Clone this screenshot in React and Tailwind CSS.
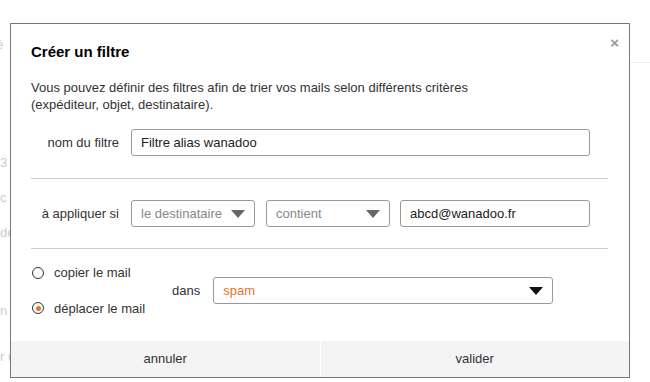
import React from 'react'

const font = { fontFamily: '"Liberation Sans", Arial, sans-serif' }

function Arrow({ dark = false }) {
  return (
    <svg width="14" height="8" viewBox="0 0 14 8" className="shrink-0">
      <path d="M0 0 L14 0 L7 8 Z" fill={dark ? '#111' : '#666'} />
    </svg>
  )
}

function Select({ value, className = '', dark = false, valueClass = 'text-[#888]' }) {
  return (
    <div className={`flex h-[27px] items-center justify-between rounded-[3px] border border-[#999] bg-white pl-[9px] pr-[9px] ${className}`}>
      <span className={`text-[13px] ${valueClass}`}>{value}</span>
      <Arrow dark={dark} />
    </div>
  )
}

function Radio({ checked, label }) {
  return (
    <div className="flex items-center gap-[10px]">
      <span className="flex h-[12px] w-[12px] items-center justify-center rounded-full border border-[#333] bg-white">
        {checked && <span className="h-[5px] w-[5px] rounded-full bg-[#e8732a]" />}
      </span>
      <span className="text-[13px] text-[#333]">{label}</span>
    </div>
  )
}

export default function App() {
  return (
    <div className="relative h-[382px] w-[650px] overflow-hidden bg-white" style={font}>
      {/* faded page behind the dialog */}
      <div className="flex h-full">
        <div className="flex w-[12px] flex-col whitespace-nowrap pt-[36px] text-[13px] leading-[17px] text-[#ccc]">
          <span className="-ml-[4px] h-[118px]">é</span>
          <span className="h-[35px]">3</span>
          <span className="h-[35px]">c</span>
          <span className="h-[78px]">de</span>
          <span className="h-[46px]">n</span>
          <span>r u</span>
        </div>
        <div className="flex-1" />
        <div className="flex w-[20px] flex-col pt-[62px]">
          <div className="h-px bg-[#eee]" />
        </div>
      </div>

      <div className="absolute left-[10px] top-[23px] flex h-[355px] w-[620px] flex-col border border-[#777] bg-white">
        <button className="absolute right-[10px] top-[8px] text-[15px] font-bold text-[#999]">×</button>

        <div className="flex flex-1 flex-col pl-[20px] pr-[20px]">
          <h1 className="mt-[18px] text-[15px] font-bold leading-[20px] text-black">Créer un filtre</h1>
          <p className="mt-[17px] w-[460px] text-[13px] leading-[17px] text-[#333]">
            Vous pouvez définir des filtres afin de trier vos mails selon différents critères (expéditeur, objet, destinataire).
          </p>

          <div className="mt-[16px] flex items-center">
            <label className="w-[88px] text-right text-[13px] text-[#333]">nom du filtre</label>
            <div className="ml-[12px] flex h-[27px] w-[459px] items-center rounded-[3px] border border-[#999] px-[9px] text-[13px] text-[#222]">
              Filtre alias wanadoo
            </div>
          </div>

          <div className="mt-[22px] h-px w-[577px] bg-[#ccc]" />

          <div className="mt-[21px] flex items-center">
            <label className="w-[88px] text-right text-[13px] text-[#333]">à appliquer si</label>
            <Select value="le destinataire" className="ml-[12px] w-[124px]" />
            <Select value="contient" className="ml-[11px] w-[124px]" />
            <div className="ml-[10px] flex h-[27px] w-[190px] items-center rounded-[3px] border border-[#999] px-[9px] text-[13px] text-[#222]">
              abcd@wanadoo.fr
            </div>
          </div>

          <div className="mt-[21px] h-px w-[577px] bg-[#ccc]" />

          <div className="mt-[14px] flex items-center">
            <div className="flex flex-col gap-[16px] pl-[1px]">
              <Radio label="copier le mail" />
              <Radio checked label="déplacer le mail" />
            </div>
            <span className="ml-[27px] text-[13px] text-[#333]">dans</span>
            <Select value="spam" dark valueClass="text-[#e8732a]" className="ml-[13px] w-[340px]" />
          </div>
        </div>

        <div className="flex h-[36px] bg-[#f4f4f4]">
          <button className="flex flex-1 items-center justify-center text-[13px] text-[#333]">annuler</button>
          <div className="w-px bg-white" />
          <button className="flex flex-1 items-center justify-center text-[13px] text-[#333]">valider</button>
        </div>
      </div>
    </div>
  )
}
